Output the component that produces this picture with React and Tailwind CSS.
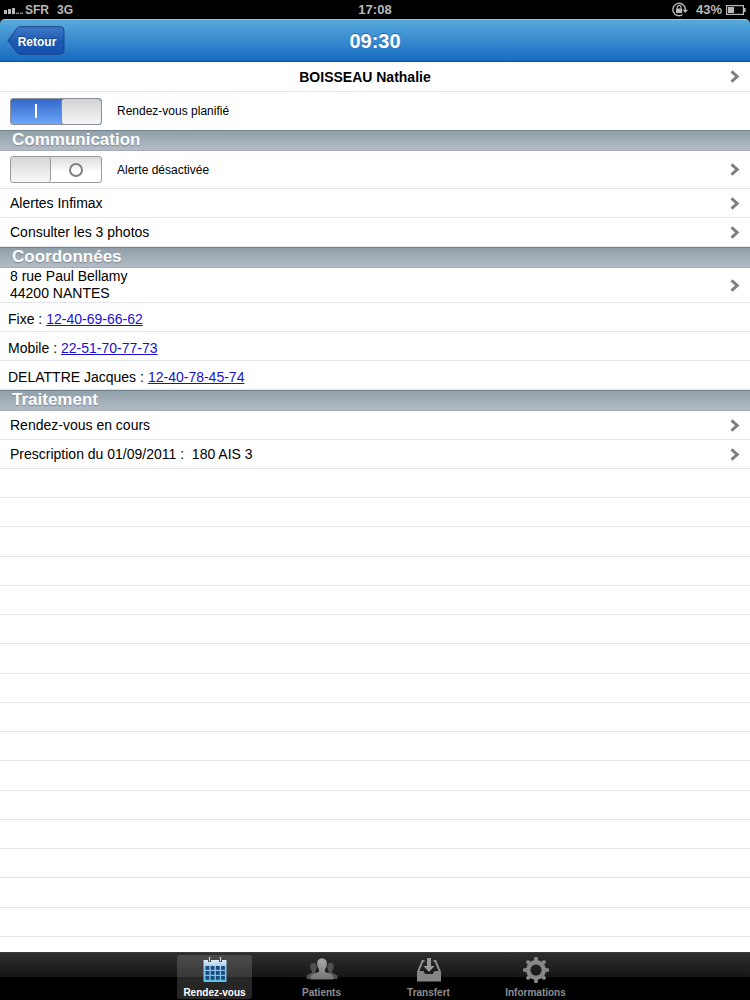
import React, { useState } from "react";

const phones = [
  { id: "fixe", label: "Fixe", number: "12-40-69-66-62" },
  { id: "mobile", label: "Mobile", number: "22-51-70-77-73" },
  { id: "contact", label: "DELATTRE Jacques", number: "12-40-78-45-74" },
];

const tabs = [
  { id: "rdv", label: "Rendez-vous", Icon: CalendarIcon },
  { id: "patients", label: "Patients", Icon: PatientsIcon },
  { id: "transfert", label: "Transfert", Icon: TransferIcon },
  { id: "infos", label: "Informations", Icon: GearIcon },
];

function Chevron() {
  return (
    <svg width="10" height="13" viewBox="0 0 10 13" fill="none" className="shrink-0">
      <path d="M1.5 1.3 7.2 6.5 1.5 11.7" stroke="#7f7f7f" strokeWidth="3" />
    </svg>
  );
}

function SignalIcon() {
  return (
    <svg width="19" height="8" viewBox="0 0 19 8" fill="#b9b9b9">
      <rect x="0" y="4" width="3" height="4" />
      <rect x="4" y="3" width="3" height="5" />
      <rect x="8" y="2" width="3" height="6" />
      <rect x="12" y="6.6" width="3" height="1.4" fill="#8a8a8a" />
      <rect x="16" y="6.6" width="3" height="1.4" fill="#8a8a8a" />
    </svg>
  );
}

function LockIcon() {
  return (
    <svg width="16" height="15" viewBox="0 0 16 15" fill="none">
      <path d="M10.5 12.7A6.2 6.2 0 1 1 13.3 8" stroke="#b9b9b9" strokeWidth="1.4" />
      <path d="M10.6 7.8H16l-2.7 3.2z" fill="#b9b9b9" />
      <rect x="4" y="6.5" width="6.2" height="4.5" fill="#b9b9b9" />
      <path d="M5.2 6.8V5.3a1.9 1.9 0 0 1 3.8 0v1.5" stroke="#b9b9b9" strokeWidth="1.2" />
    </svg>
  );
}

function BatteryIcon() {
  return (
    <svg width="20" height="10" viewBox="0 0 20 10" fill="none">
      <rect x="0.6" y="0.6" width="16.8" height="8.8" stroke="#b9b9b9" strokeWidth="1.2" />
      <rect x="2" y="2" width="6" height="6" fill="#b9b9b9" />
      <path d="M18 3h1.6v4H18" fill="#b9b9b9" />
    </svg>
  );
}

function CalendarIcon() {
  return (
    <svg width="26" height="26" viewBox="0 0 26 26">
      <defs>
        <linearGradient id="cal" x1="0" y1="0" x2="0" y2="1">
          <stop offset="0" stopColor="#dcebf8" />
          <stop offset="0.45" stopColor="#8cc0ea" />
          <stop offset="1" stopColor="#5cc4ea" />
        </linearGradient>
      </defs>
      <path d="M1.5 3h23v22h-23z" fill="url(#cal)" />
      <path d="M7.5 1v4M18.5 1v4" stroke="#2e2e2e" strokeWidth="3" />
      <path d="M7.5 0v4.5M18.5 0v4.5" stroke="#cfd8e0" strokeWidth="1.4" />
      <g fill="#1c4a78">
        {[9, 14, 19].map((y) =>
          [3.5, 8.7, 13.9, 19.1].map((x) => (
            <rect key={x + "-" + y} x={x} y={y} width="3.8" height="3.8" />
          ))
        )}
      </g>
    </svg>
  );
}

function PatientsIcon() {
  return (
    <svg width="32" height="26" viewBox="0 0 32 26">
      <defs>
        <linearGradient id="people" x1="0" y1="0" x2="0" y2="1">
          <stop offset="0" stopColor="#a8a8a8" />
          <stop offset="1" stopColor="#747474" />
        </linearGradient>
      </defs>
      <g fill="#505050">
        <ellipse cx="7.5" cy="10" rx="3.2" ry="4.2" />
        <path d="M6 12h3.5v4H12v6H.5v-2.600c0-1.900 3.500-2.400 5.500-3.900z" />
        <ellipse cx="24.5" cy="10" rx="3.2" ry="4.2" />
        <path d="M26 12h-3.500v4H20v6h11.500v-2.600c0-1.900-3.500-2.400-5.500-3.900z" />
      </g>
      <path
        d="M16 1.500c3.500 0 5 2.300 4.800 5.400-.1 2.500-.8 4.200-1.800 5.300v2.600c1.500 1.300 5.800 1.700 7.300 3 .9.800 1.200 2.200 1.200 4.700h-23c0-2.500.3-3.900 1.200-4.700 1.500-1.300 5.800-1.700 7.300-3v-2.600c-1-1.100-1.700-2.800-1.800-5.300C11 3.800 12.500 1.500 16 1.500z"
        fill="url(#people)"
      />
    </svg>
  );
}

function TransferIcon() {
  return (
    <svg width="26" height="26" viewBox="0 0 26 26" fill="none">
      <path d="M8.5 4H6.5L2.200 14.500M17.500 4h2l4.300 10.500" stroke="#8c8c8c" strokeWidth="2" />
      <path d="M1 14h6.500l1.800 3h7.400l1.800-3H25v10.500H1z" fill="#858585" />
      <path d="M11 1h4v8h3.500L13 15 7.500 9H11z" fill="#989898" />
    </svg>
  );
}

function GearIcon() {
  return (
    <svg width="26" height="26" viewBox="0 0 26 26" fill="none">
      <circle cx="13" cy="13" r="7.8" stroke="#878787" strokeWidth="4.4" />
      <g fill="#878787">
        {[0, 45, 90, 135, 180, 225, 270, 315].map((a) => (
          <path key={a} d="M10.8 4.500 11.400 0h3.200l.6 4.500z" transform={`rotate(${a} 13 13)`} />
        ))}
      </g>
    </svg>
  );
}

function SectionHeader({ title }) {
  return (
    <h2 className="h-[21px] border-y border-t-[#74848e] border-b-[#a3abb5] bg-linear-to-b from-[#90a0a8] to-[#b4bbc7] pl-3 text-[17px] leading-[17px] font-bold text-white [text-shadow:0_1px_1px_#7b8790]">
      {title}
    </h2>
  );
}

function LinkRow({ children }) {
  return (
    <a
      href="#"
      className="flex min-h-[29px] items-center justify-between border-b border-[#e4e5e8] px-2.5"
    >
      <span>{children}</span>
      <Chevron />
    </a>
  );
}

function Switch({ label, checked, onChange }) {
  return (
    <label className="flex cursor-pointer items-center gap-[15px] text-xs">
      <input type="checkbox" className="sr-only" checked={checked} onChange={onChange} />
      {checked ? (
        <span className="flex h-[27px] w-[92px] overflow-hidden rounded-[3px] border border-[#8a8f9c] bg-linear-to-b from-[#3468cc] to-[#6ca6f8]">
          <span className="flex flex-1 items-center justify-center">
            <span className="h-3.5 w-0.5 bg-white" />
          </span>
          <span className="w-10 rounded-[3px] border-l border-[#7d8aa5] bg-linear-to-b from-[#d2d2d2] to-[#f7f7f7]" />
        </span>
      ) : (
        <span className="flex h-[27px] w-[92px] overflow-hidden rounded-[3px] border border-[#9a9a9a] bg-linear-to-b from-[#dcdcdc] to-white to-60%">
          <span className="w-10 rounded-[3px] border-r border-[#999999] bg-linear-to-b from-[#d6d6d6] to-[#f7f7f7]" />
          <span className="flex flex-1 items-center justify-center">
            <span className="size-3.5 rounded-full border-2 border-[#808080]" />
          </span>
        </span>
      )}
      <span>{label}</span>
    </label>
  );
}

const App = () => {
  const [planned, setPlanned] = useState(true);
  const [alertOn, setAlertOn] = useState(false);
  const [activeTab, setActiveTab] = useState("rdv");

  return (
    <div className="flex min-h-screen flex-col bg-white font-['Liberation_Sans',Arial,sans-serif] text-sm text-black">
      {/* Barre d'état */}
      <div className="grid h-[19px] grid-cols-3 items-center bg-black px-1 text-[13px] leading-none font-bold text-[#b9b9b9]">
        <div className="flex items-center gap-0.5 text-xs">
          <SignalIcon />
          <span>SFR</span>
          <span className="pl-1.5">3G</span>
        </div>
        <div className="text-center">17:08</div>
        <div className="flex items-center justify-end gap-1">
          <LockIcon />
          <span className="pl-1">43%</span>
          <BatteryIcon />
        </div>
      </div>

      {/* Barre de navigation */}
      <div className="bg-black">
        <header className="grid h-[43px] grid-cols-3 items-center rounded-t-[5px] border-t border-b border-t-[#8cc4ea] border-b-[#1d4f86] bg-linear-to-b from-[#57a9dc] to-[#166bc0] px-[7px]">
          <button type="button" className="relative h-[29px] w-[58px] cursor-pointer">
            <svg className="absolute inset-0" width="58" height="29" viewBox="0 0 58 29">
              <defs>
                <linearGradient id="back" x1="0" y1="0" x2="0" y2="1">
                  <stop offset="0" stopColor="#3f79c6" />
                  <stop offset="0.5" stopColor="#1f5bb4" />
                  <stop offset="1" stopColor="#1650b0" />
                </linearGradient>
              </defs>
              <path
                d="M1 14.5 9.5 3C10.5 1.500 11.500 .7 13.500 .7H53a4 4 0 0 1 4 4v19.600a4 4 0 0 1-4 4H13.500c-2 0-3-.8-4-2.300z"
                fill="url(#back)"
                stroke="#1c4484"
              />
            </svg>
            <span className="relative pl-0.5 text-xs font-bold text-white [text-shadow:0_-1px_0_#1a3f78]">
              Retour
            </span>
          </button>
          <h1 className="text-center text-xl font-bold text-white [text-shadow:0_-1px_0_#2a66a0]">
            09:30
          </h1>
        </header>
      </div>

      <main className="flex flex-1 flex-col">
        <a
          href="#"
          className="flex h-[30px] items-center border-b border-[#e4e5e8] pr-2.5 font-bold"
        >
          <span className="flex-1 text-center">BOISSEAU Nathalie</span>
          <Chevron />
        </a>
        <div className="flex h-[38px] items-center px-2.5">
          <Switch
            label="Rendez-vous planifié"
            checked={planned}
            onChange={(e) => setPlanned(e.target.checked)}
          />
        </div>

        <SectionHeader title="Communication" />
        <div className="flex h-[38px] items-center justify-between border-b border-[#e4e5e8] px-2.5">
          <Switch
            label={alertOn ? "Alerte activée" : "Alerte désactivée"}
            checked={alertOn}
            onChange={(e) => setAlertOn(e.target.checked)}
          />
          <button type="button" aria-label="Alerte" className="cursor-pointer">
            <Chevron />
          </button>
        </div>
        <LinkRow>Alertes Infimax</LinkRow>
        <LinkRow>Consulter les 3 photos</LinkRow>

        <SectionHeader title="Coordonnées" />
        <LinkRow>
          <span className="block leading-[17px]">
            8 rue Paul Bellamy
            <br />
            44200 NANTES
          </span>
        </LinkRow>
        {phones.map((phone) => (
          <div
            key={phone.id}
            className="flex h-[29px] items-center gap-1 border-b border-[#e4e5e8] px-2 pt-1"
          >
            <span>{phone.label} :</span>
            <a href={"tel:" + phone.number} className="text-[#1a0fd0] underline">
              {phone.number}
            </a>
          </div>
        ))}

        <SectionHeader title="Traitement" />
        <LinkRow>Rendez-vous en cours</LinkRow>
        <LinkRow>Prescription du 01/09/2011 :&nbsp; 180 AIS 3</LinkRow>

        {/* Lignes vides en bas du tableau */}
        <div>
          {Array.from({ length: 16 }, (_, i) => (
            <div
              key={i}
              className={
                i % 4 === 2
                  ? "h-[30px] border-b border-[#e4e5e8]"
                  : "h-[29px] border-b border-[#e4e5e8]"
              }
            />
          ))}
        </div>
      </main>

      {/* Onglets */}
      <nav className="flex h-12 justify-center gap-8 border-t border-[#3c3c3c] bg-linear-to-b from-[#2e2e2e] via-[#171717] via-50% to-black to-50%">
        {tabs.map(({ id, label, Icon }) => (
          <button
            key={id}
            type="button"
            onClick={() => setActiveTab(id)}
            className={`mt-0.5 flex h-11 w-[75px] cursor-pointer flex-col items-center justify-between rounded-[3px] pt-0.5 text-[10px] leading-3 font-bold ${
              activeTab === id ? "bg-white/15 text-white" : "text-[#8f8f8f]"
            }`}
          >
            <Icon />
            <span>{label}</span>
          </button>
        ))}
      </nav>
    </div>
  );
};

export default App;
